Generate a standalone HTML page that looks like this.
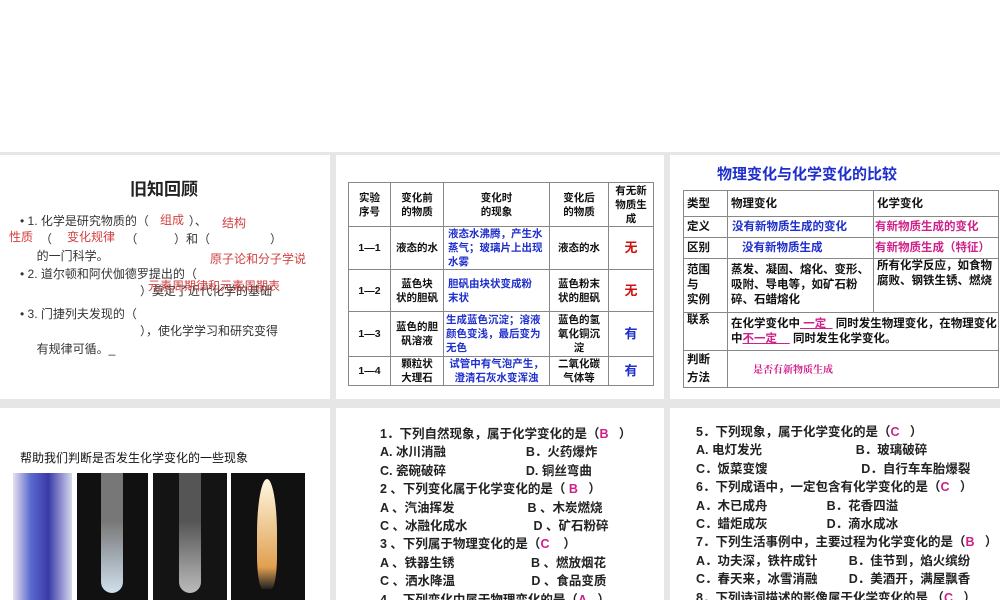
<!DOCTYPE html>
<html><head><meta charset="utf-8"><style>
*{margin:0;padding:0;box-sizing:border-box}
body{width:1000px;height:600px;background:#fff;position:relative;overflow:hidden;font-family:"Liberation Sans","Noto Sans CJK SC",sans-serif;color:#111}
.bg{position:absolute;left:0;top:152px;width:1000px;height:448px;background:#e6e6e6}
.p{position:absolute;background:#fff;overflow:hidden}
.a{position:absolute;white-space:nowrap}
table{border-collapse:collapse;position:absolute;font-weight:bold}
td{border:1px solid #888;text-align:center;font-size:10.5px;line-height:14px;padding:0}
.b{color:#1f2fcc}.r{color:#d01010}.m{color:#d0208a}
.q{position:absolute;font-size:12.5px;line-height:18.4px;white-space:pre;font-weight:bold;color:#222}
.t3 td{font-size:11.5px;line-height:14px}
</style></head><body>
<div class="bg"></div>
<div class="p" style="left:0;top:155px;width:330px;height:244px">
<div class="a" style="left:130px;top:20px;font-size:17px;font-weight:bold;color:#222">旧知回顾</div>
<div style="position:absolute;left:20px;top:58px;font-size:12px;line-height:17.5px;color:#333">
<div>• 1. 化学是研究物质的（&nbsp;&nbsp;&nbsp;&nbsp;&nbsp;&nbsp;&nbsp;&nbsp;&nbsp;&nbsp;&nbsp;&nbsp;）、</div>
<div>&nbsp;&nbsp;&nbsp;&nbsp;&nbsp;&nbsp;（&nbsp;&nbsp;&nbsp;&nbsp;&nbsp;&nbsp;&nbsp;&nbsp;&nbsp;&nbsp;&nbsp;&nbsp;&nbsp;&nbsp;&nbsp;&nbsp;&nbsp;&nbsp;&nbsp;&nbsp;&nbsp;&nbsp;（&nbsp;&nbsp;&nbsp;&nbsp;&nbsp;&nbsp;&nbsp;&nbsp;&nbsp;&nbsp;&nbsp;）和（&nbsp;&nbsp;&nbsp;&nbsp;&nbsp;&nbsp;&nbsp;&nbsp;&nbsp;&nbsp;&nbsp;&nbsp;&nbsp;&nbsp;&nbsp;&nbsp;&nbsp;&nbsp;）</div>
<div>&nbsp;&nbsp;&nbsp;&nbsp;&nbsp;的一门科学。</div>
<div>• 2. 道尔顿和阿伏伽德罗提出的（</div>
<div>&nbsp;&nbsp;&nbsp;&nbsp;&nbsp;&nbsp;&nbsp;&nbsp;&nbsp;&nbsp;&nbsp;&nbsp;&nbsp;&nbsp;&nbsp;&nbsp;&nbsp;&nbsp;&nbsp;&nbsp;&nbsp;&nbsp;&nbsp;&nbsp;&nbsp;&nbsp;&nbsp;&nbsp;&nbsp;&nbsp;&nbsp;&nbsp;&nbsp;&nbsp;&nbsp;&nbsp;）奠定了近代化学的基础</div>
<div style="margin-top:5px">• 3. 门捷列夫发现的（</div>
<div>&nbsp;&nbsp;&nbsp;&nbsp;&nbsp;&nbsp;&nbsp;&nbsp;&nbsp;&nbsp;&nbsp;&nbsp;&nbsp;&nbsp;&nbsp;&nbsp;&nbsp;&nbsp;&nbsp;&nbsp;&nbsp;&nbsp;&nbsp;&nbsp;&nbsp;&nbsp;&nbsp;&nbsp;&nbsp;&nbsp;&nbsp;&nbsp;&nbsp;&nbsp;&nbsp;&nbsp;），使化学学习和研究变得</div>
<div>&nbsp;&nbsp;&nbsp;&nbsp;&nbsp;有规律可循。_</div>
</div>
<div class="a" style="left:160px;top:56px;font-size:12px;color:#d04040">组成</div>
<div class="a" style="left:222px;top:59px;font-size:12px;color:#d04040">结构</div>
<div class="a" style="left:9px;top:73px;font-size:12px;color:#d04040">性质</div>
<div class="a" style="left:67px;top:73px;font-size:12px;color:#d04040">变化规律</div>
<div class="a" style="left:210px;top:95px;font-size:12px;color:#d04040">原子论和分子学说</div>
<div class="a" style="left:148px;top:122px;font-size:12px;color:#d04040">元素周期律和元素周期表</div>
</div>
<div class="p" style="left:336px;top:155px;width:328px;height:244px">
<table style="left:12px;top:27px;width:306px;height:201px">
<tr style="height:44px"><td style="width:42px">实验<br>序号</td><td style="width:53px">变化前<br>的物质</td><td style="width:106px">变化时<br>的现象</td><td style="width:59px">变化后<br>的物质</td><td>有无新<br>物质生<br>成</td></tr>
<tr style="height:36px"><td>1—1</td><td>液态的水</td><td class="b" style="text-align:left;padding-left:4px">液态水沸腾，产生水蒸气；玻璃片上出现水雾</td><td>液态的水</td><td class="r" style="font-size:13px">无</td></tr>
<tr style="height:42px"><td>1—2</td><td>蓝色块<br>状的胆矾</td><td class="b" style="text-align:left;padding-left:4px">胆矾由块状变成粉<br>末状</td><td>蓝色粉末<br>状的胆矾</td><td class="r" style="font-size:13px">无</td></tr>
<tr style="height:45px"><td>1—3</td><td>蓝色的胆<br>矾溶液</td><td class="b" style="text-align:left;padding-left:2px">生成蓝色沉淀；溶液颜色变浅，最后变为无色</td><td>蓝色的氢<br>氧化铜沉<br>淀</td><td class="b" style="font-size:13px">有</td></tr>
<tr><td>1—4</td><td>颗粒状<br>大理石</td><td class="b">试管中有气泡产生，<br>澄清石灰水变浑浊</td><td>二氧化碳<br>气体等</td><td class="b" style="font-size:13px">有</td></tr>
</table>
</div>
<div class="p" style="left:670px;top:155px;width:330px;height:244px">
<div class="a b" style="left:47px;top:8px;font-size:15px;font-weight:bold">物理变化与化学变化的比较</div>
<table class="t3" style="left:13px;top:35px;width:316px;height:197px">
<tr style="height:26px"><td style="width:44px;text-align:left;padding-left:3px">类型</td><td style="width:146px;text-align:left;padding-left:3px">物理变化</td><td style="text-align:left;padding-left:3px">化学变化</td></tr>
<tr style="height:21px"><td style="text-align:left;padding-left:3px">定义</td><td class="b" style="text-align:left;padding-left:4px">没有新物质生成的变化</td><td class="m" style="text-align:left;padding-left:1px">有新物质生成的变化</td></tr>
<tr style="height:21px"><td style="text-align:left;padding-left:3px">区别</td><td class="b" style="text-align:left;padding-left:14px">没有新物质生成</td><td class="m" style="text-align:left;padding-left:1px">有新物质生成（特征）</td></tr>
<tr style="height:54px"><td style="text-align:left;padding-left:3px;line-height:15px">范围<br>与<br>实例</td><td style="text-align:left;padding-left:3px;line-height:15px">蒸发、凝固、熔化、变形、吸附、导电等，如矿石粉碎、石蜡熔化</td><td style="text-align:left;padding-left:3px;line-height:15px;vertical-align:top">所有化学反应，如食物腐败、钢铁生锈、燃烧</td></tr>
<tr style="height:38px"><td style="text-align:left;padding-left:3px;vertical-align:top">联系</td><td colspan="2" style="text-align:left;padding-left:3px;line-height:15px">在化学变化中<u class="m">&nbsp;一定&nbsp;&nbsp;</u> 同时发生物理变化，在物理变化中<u class="m">不一定&nbsp;&nbsp;&nbsp;&nbsp;</u> 同时发生化学变化。</td></tr>
<tr><td style="text-align:left;padding-left:3px;line-height:18px">判断<br>方法</td><td colspan="2" class="m" style="text-align:left;padding-left:25px;font-size:10px;font-family:'Noto Serif CJK SC',serif">是否有新物质生成</td></tr>
</table>
</div>
<div class="p" style="left:0;top:408px;width:330px;height:192px">
<div class="a" style="left:20px;top:41px;font-size:12px">帮助我们判断是否发生化学变化的一些现象</div>
<div style="position:absolute;left:13px;top:65px;width:59px;height:130px;background:linear-gradient(90deg,#e8e0ee,#5a6ad0 30%,#3a3aa8 60%,#d8d8ee)"></div>
<div style="position:absolute;left:77px;top:65px;width:71px;height:130px;background:#111"><div style="position:absolute;left:24px;top:0;width:22px;height:120px;border-radius:0 0 11px 11px;background:linear-gradient(#777 40%,#cfe0ee)"></div></div>
<div style="position:absolute;left:153px;top:65px;width:74px;height:130px;background:#141414"><div style="position:absolute;left:26px;top:0;width:22px;height:120px;border-radius:0 0 11px 11px;background:linear-gradient(#555 40%,#bbb)"></div></div>
<div style="position:absolute;left:231px;top:65px;width:74px;height:130px;background:#111"><div style="position:absolute;left:26px;top:6px;width:20px;height:110px;border-radius:50% 50% 30% 30%;background:linear-gradient(#fff7e0,#e0a050 80%,#222)"></div></div>
</div>
<div class="p" style="left:336px;top:408px;width:328px;height:192px">
<div class="q" style="left:44px;top:17px">1．下列自然现象，属于化学变化的是（<span class="m">B</span>&nbsp;&nbsp;&nbsp;）
A. 冰川消融                       B．火药爆炸
C. 瓷碗破碎                       D. 铜丝弯曲
2 、下列变化属于化学变化的是（ <span class="m">B</span>&nbsp;&nbsp;&nbsp;）
A 、汽油挥发                     B 、木炭燃烧
C 、冰融化成水                   D 、矿石粉碎
3 、下列属于物理变化的是（<span class="m">C</span>&nbsp;&nbsp;&nbsp;&nbsp;）
A 、铁器生锈                      B 、燃放烟花
C 、洒水降温                      D 、食品变质
4 、下列变化中属于物理变化的是（<span class="m">A</span>&nbsp;&nbsp;&nbsp;）</div>
</div>
<div class="p" style="left:670px;top:408px;width:330px;height:192px">
<div class="q" style="left:26px;top:15px">5．下列现象，属于化学变化的是（<span class="m">C</span>&nbsp;&nbsp;&nbsp;）
A. 电灯发光                           B．玻璃破碎
C．饭菜变馊                           D．自行车车胎爆裂
6．下列成语中，一定包含有化学变化的是（<span class="m">C</span>&nbsp;&nbsp;&nbsp;）
A．木已成舟                 B．花香四溢
C．蜡炬成灰                 D．滴水成冰
7．下列生活事例中，主要过程为化学变化的是（<span class="m">B</span>&nbsp;&nbsp;&nbsp;）
A．功夫深，铁杵成针         B．佳节到，焰火缤纷
C．春天来，冰雪消融         D．美酒开，满屋飘香
8．下列诗词描述的影像属于化学变化的是 （<span class="m">C</span>&nbsp;&nbsp;&nbsp;）
A．白玉为床，金做马（《红楼梦》）
B．大河上下，顿失滔滔（《毛泽东诗词选》）</div>
</div>
</body></html>
